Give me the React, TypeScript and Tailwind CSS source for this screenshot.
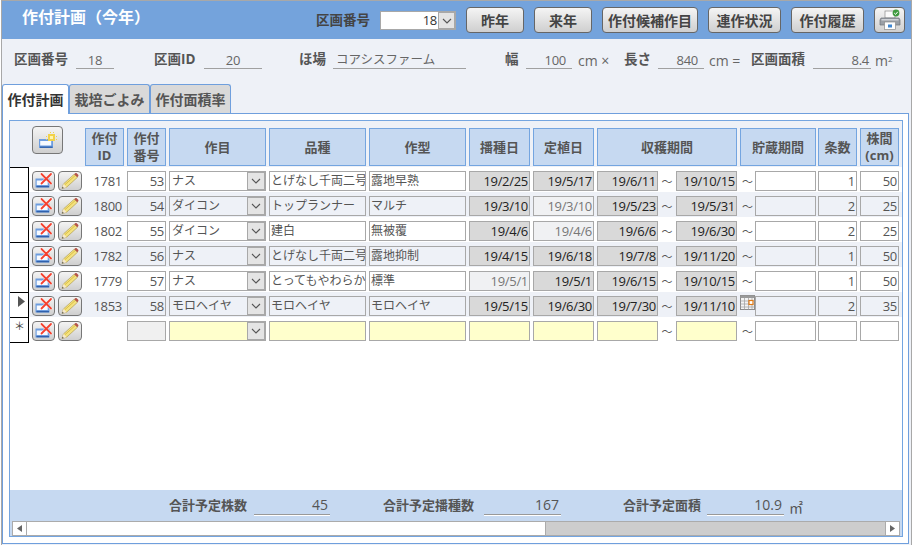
import React from "react";

const FONT = { fontFamily: '"Open Sans","Noto Sans CJK JP",sans-serif' };

function FormBox({ x = 5, y = 8 }: { x?: number; y?: number }) {
  return (
    <g>
      <rect x={x} y={y} width="14" height="9" fill="#6d9ddf" />
      <rect x={x + 1.2} y={y + 2} width="11" height="4.5" fill="#f6faff" />
      <rect x={x + 1} y={y + 7.6} width="12.5" height="1.2" fill="#2a5aa6" />
    </g>
  );
}

function DeleteBtn() {
  return (
    <div className="w-[23px] h-[20px] shrink-0 rounded-[4px] border border-[#777] bg-linear-to-b from-[#f4f4f4] to-[#cfcfcf]">
      <svg width="21" height="18" viewBox="0 0 21 18">
        <FormBox x={2.5} y={6.5} />
        <path d="M8.5 2l9.5 9.5M18 2l-9.5 9.5" stroke="#fff" strokeOpacity="0.7" strokeWidth="3" strokeLinecap="round" />
        <path d="M8.5 2l9.5 9.5M18 2l-9.5 9.5" stroke="#f4412f" strokeWidth="1.8" strokeLinecap="round" />
      </svg>
    </div>
  );
}

function PencilBtn() {
  return (
    <div className="w-[24px] h-[20px] shrink-0 rounded-[4px] border border-[#777] bg-linear-to-b from-[#f4f4f4] to-[#cfcfcf]">
      <svg width="22" height="18" viewBox="0 0 22 18">
        <path d="M3 16.5l1.4-4.5L15.2 2.2l3.2 3.2L7.6 15.2z" fill="#f3e27e" stroke="#a8924a" strokeWidth="0.6" />
        <path d="M6 12.6L16.6 3.2" stroke="#d9b93e" strokeWidth="0.9" />
        <path d="M4.4 12l3.2 3.2-4.6 1.3z" fill="#f5e8cf" />
        <path d="M3 16.5l.5-1.8 1.3 1.3z" fill="#444" />
        <path d="M15.2 2.2l1-1c.5-.4 1-.4 1.5 0l1.5 1.5c.4.5.4 1 0 1.5l-.8 1.1z" fill="#b4554b" />
      </svg>
    </div>
  );
}

function Printer() {
  return (
    <svg width="24" height="22" viewBox="0 0 24 22">
      <rect x="7" y="2" width="10" height="7" fill="#fafafa" stroke="#8a8a8a" strokeWidth="0.7" />
      <path d="M3 9h18l1 2v5H2v-5z" fill="#9a9fa6" stroke="#6f7379" strokeWidth="0.7" />
      <rect x="3.5" y="10" width="17" height="1.5" fill="#cfd2d6" />
      <rect x="6.5" y="13" width="11" height="7.5" fill="#fdfdfd" stroke="#8a8a8a" strokeWidth="0.7" />
      <rect x="10" y="15.5" width="4" height="3" fill="#3d85d0" />
      <circle cx="18" cy="4" r="3.4" fill="#3f9a3f" />
      <path d="M16.2 4l1.4 1.4 2.2-2.6" fill="none" stroke="#fff" strokeWidth="1" />
    </svg>
  );
}

function Calendar() {
  return (
    <svg width="15" height="15" viewBox="0 0 15 15" className="shrink-0 -mt-[1px]">
      <rect x="0.5" y="0.5" width="14" height="14" fill="#f4f4f4" stroke="#8a8a8a" />
      <rect x="0.5" y="0.5" width="14" height="2.5" fill="#9a9a9a" />
      <path d="M4.5 3v11.5M8.5 3v11.5M12 3v11.5M.5 6h14M.5 9h14M.5 12h14" stroke="#a5a5a5" strokeWidth="0.8" />
      <rect x="9" y="5.5" width="4" height="4" fill="#fff" stroke="#e07b16" strokeWidth="1.2" />
    </svg>
  );
}

function HeadCell({ w, children }: { w: string; children: React.ReactNode }) {
  return (
    <div className={`${w} h-[38px] shrink-0 flex items-center justify-center text-center bg-[#c6d9f1] border border-[#74a5e0] text-[13px] leading-[17px] font-bold text-[#555]`}>
      <div>{children}</div>
    </div>
  );
}

type Tone = "white" | "clear" | "dark" | "light" | "yellow" | "none";
const toneClass: Record<Tone, string> = {
  white: "bg-white text-[#555]",
  clear: "bg-[#eef1f7] text-[#555]",
  dark: "bg-[#d9d9d9] text-[#222]",
  light: "bg-[#f0f1f3] text-[#777]",
  yellow: "bg-[#ffffcc] text-[#555]",
  none: "bg-[#f0f0f0] text-[#555]",
};

function Box({ w, tone, right = true, children }: { w: string; tone: Tone; right?: boolean; children?: React.ReactNode }) {
  return (
    <div className={`${w} h-[20px] shrink-0 border border-[#a8a8a8] overflow-hidden whitespace-nowrap leading-[18px] ${right ? "text-right pr-[1px] text-[13px] tracking-[-0.3px]" : "text-left pl-[1px] text-[12px]"} ${toneClass[tone]}`}>
      {children}
    </div>
  );
}

function Combo({ tone, children }: { tone: Tone; children?: React.ReactNode }) {
  return (
    <div className={`w-[97px] h-[20px] shrink-0 flex border border-[#a8a8a8] leading-[18px] ${toneClass[tone]}`}>
      <div className="flex-1 pl-[2px] whitespace-nowrap overflow-hidden">{children}</div>
      <div className="w-[18px] bg-[#e4e4e4] border border-[#a8a8a8] flex items-center justify-center">
        <svg width="10" height="6" viewBox="0 0 10 6"><path d="M1 1l4 4 4-4" fill="none" stroke="#555" strokeWidth="1.1" /></svg>
      </div>
    </div>
  );
}

type Row = {
  id: string; no: string; crop: string; variety: string; type: string;
  sow: string; sowT: Tone; plant: string; plantT: Tone; h1: string; h2: string; rows: string; gap: string;
};

const data: Row[] = [
  { id: "1781", no: "53", crop: "ナス", variety: "とげなし千両二号", type: "露地早熟", sow: "19/2/25", sowT: "dark", plant: "19/5/17", plantT: "dark", h1: "19/6/11", h2: "19/10/15", rows: "1", gap: "50" },
  { id: "1800", no: "54", crop: "ダイコン", variety: "トップランナー", type: "マルチ", sow: "19/3/10", sowT: "dark", plant: "19/3/10", plantT: "light", h1: "19/5/23", h2: "19/5/31", rows: "2", gap: "25" },
  { id: "1802", no: "55", crop: "ダイコン", variety: "建白", type: "無被覆", sow: "19/4/6", sowT: "dark", plant: "19/4/6", plantT: "light", h1: "19/6/6", h2: "19/6/30", rows: "2", gap: "25" },
  { id: "1782", no: "56", crop: "ナス", variety: "とげなし千両二号", type: "露地抑制", sow: "19/4/15", sowT: "dark", plant: "19/6/18", plantT: "dark", h1: "19/7/8", h2: "19/11/20", rows: "1", gap: "50" },
  { id: "1779", no: "57", crop: "ナス", variety: "とってもやわらか", type: "標準", sow: "19/5/1", sowT: "light", plant: "19/5/1", plantT: "dark", h1: "19/6/15", h2: "19/10/15", rows: "1", gap: "50" },
  { id: "1853", no: "58", crop: "モロヘイヤ", variety: "モロヘイヤ", type: "モロヘイヤ", sow: "19/5/15", sowT: "dark", plant: "19/6/30", plantT: "dark", h1: "19/7/30", h2: "19/11/10", rows: "2", gap: "35" },
];

function Tilde({ w }: { w: string }) {
  return <div className={`${w} shrink-0 h-[20px] leading-[21px] text-center text-[11px] text-[#555]`}>～</div>;
}

function Selector({ mark, last }: { mark?: React.ReactNode; last?: boolean }) {
  return (
    <div className={`w-[19px] h-[25px] shrink-0 bg-white border-t border-r border-black flex items-start justify-end pr-[3px] ${last ? "border-b h-[26px]" : ""}`}>
      {mark}
    </div>
  );
}

function TopBtn({ w, children }: { w: string; children: React.ReactNode }) {
  return (
    <div className={`${w} h-[26px] shrink-0 rounded-[4px] border border-[#666] bg-linear-to-b from-[#f5f5f5] to-[#cfcfcf] flex items-center justify-center text-[14px] font-bold text-[#444] whitespace-nowrap`}>
      {children}
    </div>
  );
}

function Label({ w, children }: { w: string; children: React.ReactNode }) {
  return <div className={`${w} h-[19px] leading-[19px] shrink-0 text-[13.5px] font-bold text-[#555] whitespace-nowrap`}>{children}</div>;
}

function Val({ w, left, children }: { w: string; left?: boolean; children: React.ReactNode }) {
  return (
    <div className={`${w} h-[19px] leading-[20px] shrink-0 border-b border-[#a0a0a0] text-[#666] whitespace-nowrap ${left ? "text-left text-[12.5px]" : "text-right text-[13px] tracking-[-0.3px]"}`}>
      {children}
    </div>
  );
}

function Tab({ w, active, children }: { w: string; active?: boolean; children: React.ReactNode }) {
  return (
    <div className={`${w} shrink-0 h-[29px] rounded-t-[3px] border border-[#6f9fdd] ${active ? "bg-white border-b-0 h-[30px] text-[#333]" : "bg-[#d9d9d9] border-b-0 text-[#555]"} flex items-center justify-center text-[14px] font-bold whitespace-nowrap`}>
      {children}
    </div>
  );
}

function FootLabel({ w, children }: { w: string; children: React.ReactNode }) {
  return <div className={`${w} shrink-0 text-[13px] font-bold text-[#555] whitespace-nowrap leading-[30px]`}>{children}</div>;
}

function FootVal({ w, children }: { w: string; children: React.ReactNode }) {
  return (
    <div className={`${w} h-[25px] shrink-0 border-b border-[#999] shadow-[0_1px_0_#fff] text-right pr-[2px] pt-[6px] text-[14px] leading-[18px] text-[#555]`}>
      {children}
    </div>
  );
}

export default function App() {
  return (
    <div style={FONT} className="w-[914px] h-[545px] overflow-hidden bg-white">
      <div className="ml-[1px] w-[911px] h-[545px] border-l border-t border-r border-[#a8a8a8] bg-[#eef1f7] flex flex-col">
        {/* header */}
        <div className="h-[38px] shrink-0 bg-[#74a3dc] flex items-start">
          <div className="w-[314px] shrink-0 pl-[20px] pt-[4px] text-[16px] leading-[24px] font-bold text-white whitespace-nowrap">作付計画（今年）</div>
          <div className="w-[64px] shrink-0 pt-[8px] text-[13.5px] leading-[22px] font-bold text-[#444] whitespace-nowrap">区画番号</div>
          <div className="w-[76px] h-[19px] mt-[10px] shrink-0 flex border border-[#a8a8a8] bg-white text-[13px] tracking-[-0.3px] leading-[17px] text-[#333]">
            <div className="flex-1 text-right pr-[1px]">18</div>
            <div className="w-[17px] bg-[#e4e4e4] border border-[#a8a8a8] flex items-center justify-center">
              <svg width="10" height="6" viewBox="0 0 10 6"><path d="M1 1l4 4 4-4" fill="none" stroke="#555" strokeWidth="1.1" /></svg>
            </div>
          </div>
          <div className="ml-[10px] mt-[6px] flex gap-[10px]">
            <TopBtn w="w-[58px]">昨年</TopBtn>
            <TopBtn w="w-[58px]">来年</TopBtn>
            <TopBtn w="w-[96px]">作付候補作目</TopBtn>
            <TopBtn w="w-[73px]">連作状況</TopBtn>
            <TopBtn w="w-[73px]">作付履歴</TopBtn>
            <TopBtn w="w-[31px]"><Printer /></TopBtn>
          </div>
        </div>

        {/* info */}
        <div className="h-[45px] shrink-0 flex items-start pt-[11px] pl-[12px]">
          <Label w="w-[54px]">区画番号</Label>
          <div className="ml-[8px]"><Val w="w-[38px] !text-center">18</Val></div>
          <div className="ml-[40px]"><Label w="w-[44px]">区画ID</Label></div>
          <div className="ml-[6px]"><Val w="w-[58px] !text-center">20</Val></div>
          <div className="ml-[37px]"><Label w="w-[26px]">ほ場</Label></div>
          <div className="ml-[8px]"><Val w="w-[133px] pl-[3px]" left>コアシスファーム</Val></div>
          <div className="ml-[39px]"><Label w="w-[14px]">幅</Label></div>
          <div className="ml-[7px]"><Val w="w-[46px] pr-[6px]">100</Val></div>
          <div className="ml-[6px] w-[32px] shrink-0 text-[14px] leading-[21px] text-[#666] whitespace-nowrap">cm ×</div>
          <div className="ml-[14px]"><Label w="w-[27px]">長さ</Label></div>
          <div className="ml-[7px]"><Val w="w-[46px] pr-[6px]">840</Val></div>
          <div className="ml-[5px] w-[36px] shrink-0 text-[14px] leading-[21px] text-[#666] whitespace-nowrap">cm =</div>
          <div className="ml-[6px]"><Label w="w-[55px]">区画面積</Label></div>
          <div className="ml-[7px]"><Val w="w-[58px] pr-[2px]">8.4</Val></div>
          <div className="ml-[4px] shrink-0 text-[14px] leading-[21px] text-[#666] whitespace-nowrap">m<sup className="text-[8px]">2</sup></div>
        </div>

        {/* tabs */}
        <div className="h-[29px] shrink-0 flex items-start relative z-10">
          <Tab w="w-[67px]" active>作付計画</Tab>
          <Tab w="w-[81px]">栽培ごよみ</Tab>
          <Tab w="w-[81px]">作付面積率</Tab>
        </div>

        {/* panel */}
        <div className="w-[907px] h-[431px] shrink-0 border border-[#6f9fdd] bg-white pt-[6px] pl-[6px]">
          <div className="w-[894px] h-[417px] border border-[#74a5e0] flex flex-col text-[12px]">
            {/* column headers */}
            <div className="h-[46px] shrink-0 bg-[#eef1f7] flex items-start pt-[7px] pl-[22px] gap-[3px]">
              <div className="w-[50px] shrink-0">
                <div className="w-[31px] h-[28px] -mt-[2px] rounded-[4px] border border-[#777] bg-linear-to-b from-[#f4f4f4] to-[#cfcfcf]">
                  <svg width="29" height="26" viewBox="0 0 29 26">
                    <FormBox x={6} y={12} />
                    <g fill="#f2d24a">
                      <rect x="15" y="7" width="7" height="7" />
                      <rect x="13" y="9" width="1" height="1" /><rect x="23" y="9" width="1" height="1" />
                      <rect x="13" y="12" width="1" height="1" /><rect x="23" y="12" width="1" height="1" />
                      <rect x="17" y="5" width="1" height="1" /><rect x="20" y="5" width="1" height="1" />
                    </g>
                    <rect x="17" y="9" width="3" height="3" fill="#fff6b0" />
                  </svg>
                </div>
              </div>
              <HeadCell w="w-[39px]">作付<br />ID</HeadCell>
              <HeadCell w="w-[39px]">作付<br />番号</HeadCell>
              <HeadCell w="w-[97px]">作目</HeadCell>
              <HeadCell w="w-[97px]">品種</HeadCell>
              <HeadCell w="w-[97px]">作型</HeadCell>
              <HeadCell w="w-[61px]">播種日</HeadCell>
              <HeadCell w="w-[61px]">定植日</HeadCell>
              <HeadCell w="w-[140px]">収穫期間</HeadCell>
              <HeadCell w="w-[76px]">貯蔵期間</HeadCell>
              <div className="-ml-[1px]"><HeadCell w="w-[39px]">条数</HeadCell></div>
              <HeadCell w="w-[39px]">株間<br />(cm)</HeadCell>
            </div>

            {/* data rows */}
            {data.map((r, i) => {
              const alt = i % 2 === 1;
              const base: Tone = alt ? "clear" : "white";
              const mark = i === 5 ? (
                <svg width="7" height="11" viewBox="0 0 7 11" className="mt-[3px]"><path d="M0 0l7 5.5L0 11z" fill="#555" /></svg>
              ) : undefined;
              return (
                <div key={r.id} className="h-[25px] shrink-0 flex">
                  <Selector mark={mark} />
                  <div className={`flex-1 flex items-start pt-[4px] pl-[3px] gap-[3px] ${alt ? "bg-[#eef1f7]" : "bg-white"}`}>
                    <DeleteBtn />
                    <PencilBtn />
                    <div className="w-[39px] h-[20px] leading-[20px] shrink-0 text-right pr-[2px] text-[13px] tracking-[-0.3px] text-[#555]">{r.id}</div>
                    <Box w="w-[39px]" tone={base}>{r.no}</Box>
                    <Combo tone={base}>{r.crop}</Combo>
                    <Box w="w-[97px]" tone={base} right={false}>{r.variety}</Box>
                    <Box w="w-[97px]" tone={base} right={false}>{r.type}</Box>
                    <Box w="w-[61px]" tone={r.sowT}>{r.sow}</Box>
                    <Box w="w-[61px]" tone={r.plantT}>{r.plant}</Box>
                    <div className="w-[140px] shrink-0 flex">
                      <Box w="w-[61px]" tone="dark">{r.h1}</Box>
                      <Tilde w="w-[18px]" />
                      <Box w="w-[61px]" tone="dark">{r.h2}</Box>
                    </div>
                    <div className="w-[76px] shrink-0 flex">
                      {i === 5 ? <Calendar /> : <Tilde w="w-[15px]" />}
                      <Box w="w-[61px]" tone={base}></Box>
                    </div>
                    <div className="-ml-[1px]"><Box w="w-[39px]" tone={base}>{r.rows}</Box></div>
                    <Box w="w-[39px]" tone={base}>{r.gap}</Box>
                  </div>
                </div>
              );
            })}

            {/* new row */}
            <div className="h-[26px] shrink-0 flex">
              <Selector last mark={<span className="text-[11px] leading-[16px] text-[#444]">＊</span>} />
              <div className="flex-1 flex items-start pt-[4px] pl-[3px] gap-[3px] bg-white">
                <DeleteBtn />
                <PencilBtn />
                <div className="w-[39px] shrink-0" />
                <Box w="w-[39px]" tone="none"></Box>
                <Combo tone="yellow"></Combo>
                <Box w="w-[97px]" tone="yellow"></Box>
                <Box w="w-[97px]" tone="yellow"></Box>
                <Box w="w-[61px]" tone="yellow"></Box>
                <Box w="w-[61px]" tone="yellow"></Box>
                <div className="w-[140px] shrink-0 flex">
                  <Box w="w-[61px]" tone="yellow"></Box>
                  <Tilde w="w-[18px]" />
                  <Box w="w-[61px]" tone="yellow"></Box>
                </div>
                <div className="w-[76px] shrink-0 flex">
                  <Tilde w="w-[15px]" />
                  <Box w="w-[61px]" tone="white"></Box>
                </div>
                <div className="-ml-[1px]"><Box w="w-[39px]" tone="white"></Box></div>
                <Box w="w-[39px]" tone="white"></Box>
              </div>
            </div>

            <div className="flex-1 bg-white" />

            {/* footer */}
            <div className="h-[31px] shrink-0 bg-[#c6d9f1] flex items-start pl-[159px]">
              <FootLabel w="w-[78px]">合計予定株数</FootLabel>
              <div className="ml-[7px]"><FootVal w="w-[76px]">45</FootVal></div>
              <div className="ml-[53px]"><FootLabel w="w-[90px]">合計予定播種数</FootLabel></div>
              <div className="ml-[11px]"><FootVal w="w-[77px]">167</FootVal></div>
              <div className="ml-[62px]"><FootLabel w="w-[78px]">合計予定面積</FootLabel></div>
              <div className="ml-[6px]"><FootVal w="w-[77px]">10.9</FootVal></div>
              <div className="ml-[5px] text-[14px] leading-[36px] text-[#555]">㎡</div>
            </div>

            {/* scrollbar */}
            <div className="h-[15px] shrink-0 bg-[#c6d9f1] flex px-[2px]">
              <div className="flex-1 flex border-t border-b border-[#ababab] bg-[#cdcdcd]">
                <div className="w-[15px] bg-white border-l border-r border-[#ababab] flex items-center justify-center">
                  <svg width="5" height="7" viewBox="0 0 5 7"><path d="M5 0v7L0 3.5z" fill="#666" /></svg>
                </div>
                <div className="w-[519px] bg-white border-r border-[#ababab]" />
                <div className="flex-1" />
                <div className="w-[15px] bg-white border-l border-r border-[#ababab] flex items-center justify-center">
                  <svg width="5" height="7" viewBox="0 0 5 7"><path d="M0 0v7l5-3.5z" fill="#666" /></svg>
                </div>
              </div>
            </div>
          </div>
        </div>
      </div>
    </div>
  );
}
